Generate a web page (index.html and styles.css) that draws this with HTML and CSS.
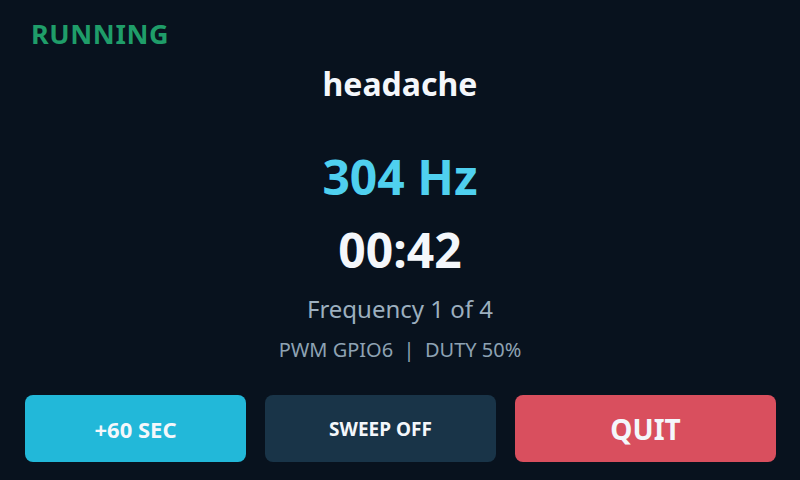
FILE: index.html
```html
<!DOCTYPE html>
<html lang="en">
<head>
<meta charset="utf-8">
<title>Tone generator</title>
<link rel="stylesheet" href="styles.css">
</head>
<body>
<div class="screen">
  <div class="status">RUNNING</div>
  <div class="title">headache</div>
  <div class="freq">304 Hz</div>
  <div class="timer">00:42</div>
  <div class="step">Frequency 1 of 4</div>
  <div class="info">PWM GPIO6&nbsp;&nbsp;|&nbsp;&nbsp;DUTY 50%</div>
  <div class="buttons">
    <button class="btn btn-add">+60 SEC</button>
    <button class="btn btn-sweep">SWEEP OFF</button>
    <button class="btn btn-quit">QUIT</button>
  </div>
</div>
</body>
</html>
```
FILE: styles.css
```css
html, body {
  margin: 0;
  padding: 0;
  background: #08121e;
}
.screen {
  width: 800px;
  height: 480px;
  box-sizing: border-box;
  padding-top: 18px;
  display: flex;
  flex-direction: column;
  font-family: "Noto Sans", "Open Sans", sans-serif;
  color: #f4f7fb;
  overflow: hidden;
}
.status {
  padding-left: 31px;
  font-size: 27px;
  line-height: 32px;
  font-weight: 700;
  letter-spacing: 0.6px;
  color: #1f9d69;
}
.title {
  margin-top: 14px;
  text-align: center;
  font-size: 32px;
  line-height: 40px;
  font-weight: 700;
}
.freq {
  margin-top: 45px;
  text-align: center;
  font-size: 48px;
  line-height: 56px;
  font-weight: 700;
  color: #4fd0ef;
}
.timer {
  margin-top: 17px;
  text-align: center;
  font-size: 48px;
  line-height: 56px;
  font-weight: 700;
}
.step {
  margin-top: 16px;
  text-align: center;
  font-size: 24px;
  line-height: 30px;
  color: #9cafbf;
}
.info {
  margin-top: 13px;
  text-align: center;
  font-size: 20px;
  line-height: 26px;
  color: #8ea2b3;
}
.buttons {
  margin-top: 32px;
  padding: 0 24px 0 25px;
  display: grid;
  grid-template-columns: 221fr 231fr 261fr;
  column-gap: 19px;
}
.btn {
  height: 67px;
  border: none;
  border-radius: 8px;
  font-family: "Noto Sans", "Open Sans", sans-serif;
  font-weight: 700;
  font-size: 20px;
  color: #f4f7fb;
  padding: 0;
}
.btn-add { background: #22b8d9; font-size: 22px; }
.btn-sweep { background: #193448; font-size: 19px; }
.btn-quit { background: #d94f5e; font-size: 28px; }
```
